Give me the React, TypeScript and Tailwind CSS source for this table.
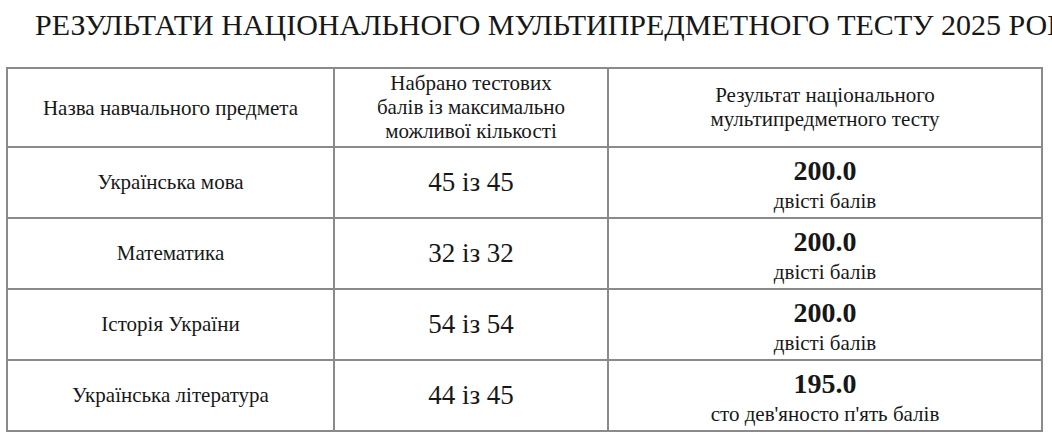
const rows = [
  { subject: "Українська мова", score: "45 із 45", result: "200.0", words: "двісті балів" },
  { subject: "Математика", score: "32 із 32", result: "200.0", words: "двісті балів" },
  { subject: "Історія України", score: "54 із 54", result: "200.0", words: "двісті балів" },
  { subject: "Українська література", score: "44 із 45", result: "195.0", words: "сто дев\u0027яносто п\u0027ять балів" },
];

export default function App() {
  return (
    <div className="w-[1052px] h-[442px] bg-white text-neutral-900 font-[Liberation_Serif] overflow-hidden">
      <h1 className="pt-[8px] pl-[35px] text-[30px] leading-[34px] whitespace-nowrap font-[Liberation_Serif]">
        РЕЗУЛЬТАТИ НАЦІОНАЛЬНОГО МУЛЬТИПРЕДМЕТНОГО ТЕСТУ 2025 РОКУ
      </h1>
      <table className="ml-[6px] mt-[25px] w-[1037px] border-collapse border-2 border-[#8a8a8a] text-center font-[Liberation_Serif]">
        <thead>
          <tr className="h-[79px] text-[21px] leading-[24px]">
            <th className="w-[327px] border-2 border-[#8a8a8a] font-normal font-[Liberation_Serif]">
              Назва навчального предмета
            </th>
            <th className="w-[274px] border-2 border-[#8a8a8a] font-normal pb-[2px] font-[Liberation_Serif]">
              Набрано тестових
              <br />
              балів із максимально
              <br />
              можливої кількості
            </th>
            <th className="border-2 border-[#8a8a8a] font-normal pb-[2px] font-[Liberation_Serif]">
              Результат національного
              <br />
              мультипредметного тесту
            </th>
          </tr>
        </thead>
        <tbody>
          {rows.map((row) => (
            <tr key={row.subject} className="h-[71px]">
              <td className="border-2 border-[#8a8a8a] text-[21px] font-[Liberation_Serif]">{row.subject}</td>
              <td className="border-2 border-[#8a8a8a] text-[27px] font-[Liberation_Serif]">{row.score}</td>
              <td className="border-2 border-[#8a8a8a] align-top pt-[7px] font-[Liberation_Serif]">
                <div className="text-[28px] leading-[32px] font-bold">{row.result}</div>
                <div className="text-[21px] leading-[28px]">{row.words}</div>
              </td>
            </tr>
          ))}
        </tbody>
      </table>
    </div>
  );
}
